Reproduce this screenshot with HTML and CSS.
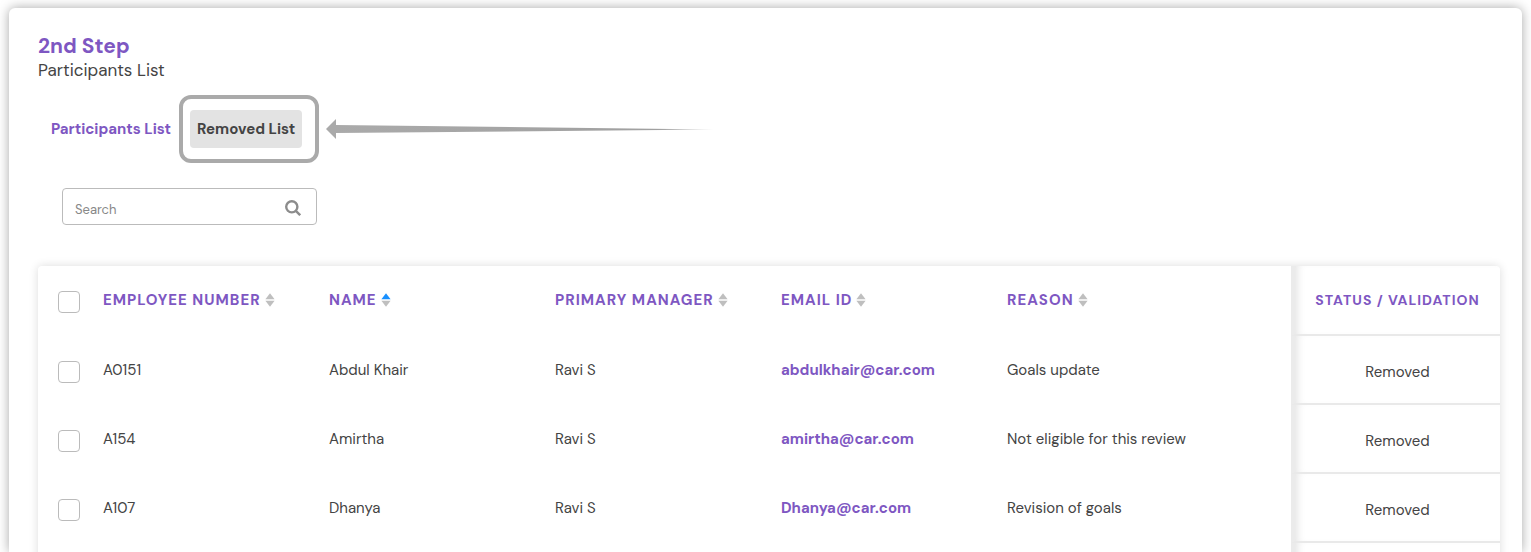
FILE: index.html
```html
<!DOCTYPE html>
<html lang="en">
<head>
    <meta charset="UTF-8">
    <meta name="viewport" content="width=device-width, initial-scale=1.0">
    <title>Participants List</title>
    <link rel="stylesheet" href="styles.css">
</head>
<body>
    <svg class="sprite" aria-hidden="true">
        <symbol id="sort" viewBox="0 0 10 14">
            <path class="sort-up" d="M5 0.2 9.6 6.2H0.4Z"/>
            <path class="sort-down" d="M5 13.8 0.4 7.8H9.6Z"/>
        </symbol>
    </svg>

    <main class="card">
        <h1 class="step-title">2nd Step</h1>
        <p class="step-subtitle">Participants List</p>

        <div class="tabs">
            <button type="button" class="tab">Participants List</button>
            <div class="tab-marked">
                <button type="button" class="tab active">Removed List</button>
                <span class="marker"></span>
                <svg class="marker-arrow" viewBox="0 0 388 20" aria-hidden="true">
                    <defs>
                        <linearGradient id="tail" x1="0" x2="1">
                            <stop offset="0" stop-color="#aaa"/>
                            <stop offset="0.85" stop-color="#a0a0a0"/>
                            <stop offset="1" stop-color="#a0a0a0" stop-opacity="0.4"/>
                        </linearGradient>
                    </defs>
                    <path fill="#aaa" d="M0 10 10 0V20Z"/>
                    <path fill="url(#tail)" d="M10 6 388 10.5 10 14Z"/>
                </svg>
            </div>
        </div>

        <div class="search">
            <input type="text" class="search-input" placeholder="Search" aria-label="Search">
            <button type="button" class="search-button" aria-label="Search the list">
                <svg viewBox="0 0 16 16" width="16" height="16">
                    <circle cx="6.8" cy="6.8" r="5.6"/>
                    <path d="M10.8 10.8 15.2 15.2"/>
                </svg>
            </button>
        </div>

        <table class="list">
            <colgroup>
                <col class="col-check">
                <col class="col-data">
                <col class="col-data">
                <col class="col-data">
                <col class="col-data">
                <col>
                <col class="col-status">
            </colgroup>
            <thead>
                <tr>
                    <th class="pick"><input type="checkbox" class="check" aria-label="Select all"></th>
                    <th>EMPLOYEE NUMBER<svg class="sort"><use href="#sort"/></svg></th>
                    <th>NAME<svg class="sort asc"><use href="#sort"/></svg></th>
                    <th>PRIMARY MANAGER<svg class="sort"><use href="#sort"/></svg></th>
                    <th>EMAIL ID<svg class="sort"><use href="#sort"/></svg></th>
                    <th>REASON<svg class="sort"><use href="#sort"/></svg></th>
                    <th class="status">STATUS / VALIDATION</th>
                </tr>
            </thead>
            <tbody>
                <tr>
                    <td class="pick"><input type="checkbox" class="check" aria-label="Select Abdul Khair"></td>
                    <td>A0151</td>
                    <td>Abdul Khair</td>
                    <td>Ravi S</td>
                    <td><a class="mail" href="mailto:abdulkhair@car.com">abdulkhair@car.com</a></td>
                    <td>Goals update</td>
                    <td class="status">Removed</td>
                </tr>
                <tr>
                    <td class="pick"><input type="checkbox" class="check" aria-label="Select Amirtha"></td>
                    <td>A154</td>
                    <td>Amirtha</td>
                    <td>Ravi S</td>
                    <td><a class="mail" href="mailto:amirtha@car.com">amirtha@car.com</a></td>
                    <td>Not eligible for this review</td>
                    <td class="status">Removed</td>
                </tr>
                <tr>
                    <td class="pick"><input type="checkbox" class="check" aria-label="Select Dhanya"></td>
                    <td>A107</td>
                    <td>Dhanya</td>
                    <td>Ravi S</td>
                    <td><a class="mail" href="mailto:Dhanya@car.com">Dhanya@car.com</a></td>
                    <td>Revision of goals</td>
                    <td class="status">Removed</td>
                </tr>
                <tr>
                    <td colspan="6"></td>
                    <td class="status"></td>
                </tr>
            </tbody>
        </table>
    </main>
</body>
</html>
```

FILE: styles.css
```css
* {
    box-sizing: border-box;
}
body {
    margin: 0;
    padding: 8px 9px 0;
    height: 100vh;
    overflow: hidden;
    background-color: #fff;
    color: #444;
    font-family: "DM Sans", Inter, sans-serif;
    font-size: 15px;
}
button, input {
    font-family: inherit;
}
.sprite {
    position: absolute;
    width: 0;
    height: 0;
}
.card {
    height: 100%;
    padding: 26px 22px 0 29px;
    overflow: hidden;
    background-color: #fff;
    border-radius: 6px 6px 0 0;
    box-shadow: 0 0 12px rgba(0, 0, 0, 0.35);
}
.step-title {
    margin: 0;
    color: #7e57c2;
    font-size: 21px;
    font-weight: 700;
    line-height: 24px;
}
.step-subtitle {
    margin: 0;
    font-size: 17px;
    line-height: 24px;
}

/* tabs */
.tabs {
    display: flex;
    gap: 12px;
    margin-top: 28px;
    padding-left: 6px;
}
.tab {
    height: 38px;
    padding: 0 7px;
    border: none;
    border-radius: 4px;
    background: none;
    color: #7e57c2;
    font-size: 15px;
    font-weight: 700;
    cursor: pointer;
}
.tab.active {
    background-color: #e3e3e3;
    color: #444;
}
.tab-marked {
    position: relative;
}
.marker {
    position: absolute;
    top: -15px;
    right: -17px;
    bottom: -15px;
    left: -11px;
    border: 4px solid #aaa;
    border-radius: 12px;
    pointer-events: none;
}
.marker-arrow {
    position: absolute;
    top: 9px;
    left: calc(100% + 24px);
    width: 388px;
    height: 20px;
}

/* search */
.search {
    display: flex;
    align-items: center;
    width: 255px;
    height: 37px;
    margin: 40px 0 0 24px;
    padding: 0 15px 0 12px;
    border: 1px solid #bbb;
    border-radius: 4px;
}
.search-input {
    flex: 1;
    min-width: 0;
    padding: 6px 0 0;
    border: none;
    outline: none;
    background: none;
    font-size: 13px;
}
.search-input::placeholder {
    color: #888;
}
.search-button {
    display: flex;
    padding: 2px 0 0;
    border: none;
    background: none;
    cursor: pointer;
}
.search-button svg {
    fill: none;
    stroke: #8c8c8c;
    stroke-width: 2.4;
}

/* table */
.list {
    width: 100%;
    margin-top: 41px;
    table-layout: fixed;
    border-collapse: separate;
    border-spacing: 0;
    border-radius: 4px;
    box-shadow: 0 0 10px rgba(0, 0, 0, 0.14);
}
.col-check {
    width: 65px;
}
.col-data {
    width: 226px;
}
.col-status {
    width: 209px;
}
.list th, .list td {
    height: 69px;
    padding: 0 0 2px;
    text-align: left;
    vertical-align: middle;
}
.list th {
    height: 70px;
    color: #7e57c2;
    font-size: 15px;
    font-weight: 700;
    letter-spacing: 1px;
    white-space: nowrap;
}
.list .pick {
    padding: 0;
}
.list .status {
    padding: 4px 0 0;
    border-left: 4px solid #ebebeb;
    border-bottom: 2px solid #e9e9e9;
    box-shadow: inset 8px 0 8px -6px rgba(0, 0, 0, 0.12);
    text-align: center;
}
.list th.status {
    padding: 0;
    border-top-right-radius: 4px;
    font-size: 14px;
}
.check {
    display: block;
    width: 22px;
    height: 22px;
    margin: 2px 0 0 20px;
    appearance: none;
    border: 1px solid #bbb;
    border-radius: 4px;
    background-color: #fff;
}
.check:checked {
    background-color: #7e57c2;
}
.sort {
    width: 10px;
    height: 14px;
    margin-left: 4px;
    vertical-align: -2px;
    fill: #bfbfbf;
    --up: #bfbfbf;
}
.sort.asc {
    --up: #1890ff;
}
.sort-up {
    fill: var(--up);
}
.mail {
    color: #7e57c2;
    font-weight: 700;
    text-decoration: none;
}
```
